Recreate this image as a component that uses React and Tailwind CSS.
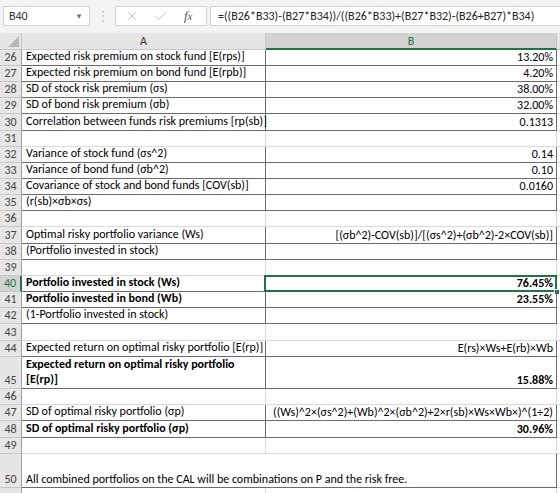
import { X, Check } from 'lucide-react';

// Excel-style worksheet view: formula bar + columns A/B, rows 26–51.

const DARK = 'border-[#6b6b6b]';

const ROWS = [
  { n: 26, a: 'Expected risk premium on stock fund [E(rps)]', b: '13.20%' },
  { n: 27, a: 'Expected risk premium on bond fund [E(rpb)]', b: '4.20%' },
  { n: 28, a: 'SD of stock risk premium (σs)', b: '38.00%' },
  { n: 29, a: 'SD of bond risk premium (σb)', b: '32.00%' },
  { n: 30, a: 'Correlation between funds risk premiums [rp(sb)]', b: '0.1313', extra: true },
  { n: 31, empty: true },
  { n: 32, a: 'Variance of stock fund (σs^2)', b: '0.14' },
  { n: 33, a: 'Variance of bond fund (σb^2)', b: '0.10' },
  { n: 34, a: 'Covariance of stock and bond funds [COV(sb)]', b: '0.0160' },
  { n: 35, a: '(r(sb)×σb×σs)', b: '' },
  { n: 36, empty: true },
  { n: 37, a: 'Optimal risky portfolio variance (Ws)', b: '[(σb^2)-COV(sb)]/[(σs^2)+(σb^2)-2×COV(sb)]', extra: true },
  { n: 38, a: '(Portfolio invested in stock)', b: '' },
  { n: 39, empty: true },
  { n: 40, a: 'Portfolio invested in stock (Ws)', b: '76.45%', bold: true, selected: true },
  { n: 41, a: 'Portfolio invested in bond (Wb)', b: '23.55%', bold: true },
  { n: 42, a: '(1-Portfolio invested in stock)', b: '' },
  { n: 43, empty: true, extra: true },
  { n: 44, a: 'Expected return on optimal risky portfolio [E(rp)]', b: 'E(rs)×Ws+E(rb)×Wb' },
  { n: 45, a: ['Expected return on optimal risky portfolio', '[E(rp)]'], b: '15.88%', bold: true, tall: true },
  { n: 46, empty: true },
  { n: 47, a: 'SD of optimal risky portfolio (σp)', b: '((Ws)^2×(σs^2)+(Wb)^2×(σb^2)+2×r(sb)×Ws×Wb×)^(1÷2)' },
  { n: 48, a: 'SD of optimal risky portfolio (σp)', b: '30.96%', bold: true, extra: true },
  { n: 49, empty: true },
  { n: 50, merged: 'All combined portfolios on the CAL will be combinations on P and the risk free.' },
  { n: 51, empty: true, hidden: true },
];

function FormulaBar() {
  return (
    <div className="h-[33px] bg-[#f3f3f3] flex items-start pt-[6px] pl-[3px] shrink-0">
      <div className="w-[87px] h-[20px] bg-white border border-[#d4d4d4] flex items-center pl-[5px] pr-[6px] justify-between">
        <span className="text-[12px] text-[#333]">B40</span>
        <span className="text-[8px] text-[#777]">▼</span>
      </div>
      <div className="w-[25px] h-[20px] flex items-center justify-center text-[#bdbdbd] text-[12px]">⋮</div>
      <div className="w-[92px] h-[20px] bg-white border border-[#d4d4d4] flex items-center pl-[9px] gap-[14px]">
        <X size={14} strokeWidth={1.2} className="text-[#a8a8a8]" />
        <Check size={15} strokeWidth={1.2} className="text-[#a8a8a8]" />
        <span className="font-['Liberation_Serif',serif] italic text-[13px] text-[#555] ml-[2px]">
          f<span className="text-[10px]">x</span>
        </span>
      </div>
      <div className="flex-1 h-[20px] ml-[3px] bg-white border border-[#d4d4d4] border-r-0 flex items-center pl-[7px] text-[12px] text-[#222] whitespace-nowrap overflow-hidden">
        =((B26*B33)-(B27*B34))/((B26*B33)+(B27*B32)-(B26+B27)*B34)
      </div>
    </div>
  );
}

function HeaderRow() {
  return (
    <div className="flex h-[17px] bg-[#f3f3f3] shrink-0">
      <div className="w-[22px] h-full bg-[#e6e6e6] border-r border-b border-[#c6c6c6] relative">
        <div className="absolute right-[2px] bottom-[2px] w-0 h-0 border-l-[11px] border-l-transparent border-b-[11px] border-b-[#b8b8b8]" />
      </div>
      <div className="w-[244px] h-full bg-[#e6e6e6] border-r border-b border-[#c6c6c6] flex items-center justify-center text-[12px] text-[#333]">
        A
      </div>
      <div className="w-[291px] h-full bg-[#d2d2d2] border-r border-[#c6c6c6] border-b-2 border-b-[#217346] flex items-center justify-center text-[12px] text-[#217346]">
        B
      </div>
      <div className="flex-1 h-full bg-[#e6e6e6] border-b border-[#c6c6c6]" />
    </div>
  );
}

function SheetRow({ row, nextBordered }) {
  const bordered = !row.empty;
  const h = row.tall ? 'h-[32px]' : row.n === 50 ? 'h-[34px]' : row.extra ? 'h-[17px]' : 'h-[16px]';
  const bottom = bordered || nextBordered ? DARK : 'border-[#dadada]';
  const side = bordered ? DARK : 'border-[#dadada]';
  const weight = row.bold ? 'font-bold' : '';

  return (
    <div className="flex shrink-0">
      <div
        className={`w-[22px] ${h} border-b border-[#c6c6c6] flex items-end justify-center pb-[1px] text-[12px] leading-[14px] ${
          row.selected
            ? 'bg-[#d2d2d2] text-[#217346] border-r-2 border-r-[#217346]'
            : 'bg-[#e6e6e6] text-[#444] border-r border-r-[#9e9e9e]'
        }`}
      >
        {!row.hidden && row.n}
      </div>

      {row.merged ? (
        <div className={`w-[535px] ${h} border-b border-r ${DARK} flex items-end pl-[4px] pb-[1px] text-[12px] leading-[14px] text-black whitespace-nowrap`}>
          {row.merged}
        </div>
      ) : (
        <>
          <div
            className={`w-[244px] ${h} border-b border-r ${bottom} ${side} flex flex-col justify-end pl-[4px] pb-[1px] text-[12px] leading-[15px] text-black whitespace-nowrap ${weight}`}
          >
            {Array.isArray(row.a) ? row.a.map(line => <span key={line}>{line}</span>) : row.a}
          </div>
          <div
            className={`w-[291px] ${h} border-b border-r ${bottom} ${side} relative flex items-end justify-end pr-[3px] pb-[1px] text-[12px] leading-[14px] text-black whitespace-nowrap ${weight}`}
          >
            {row.b}
            {row.selected && (
              <>
                <div className="absolute -left-[2px] -top-[1px] -right-[1px] -bottom-[1px] border-2 border-[#217346] pointer-events-none" />
                <div className="absolute -right-[4px] -bottom-[4px] w-[6px] h-[6px] bg-[#217346] border border-white" />
              </>
            )}
          </div>
        </>
      )}
      <div className={`flex-1 ${h} border-b border-[#dadada]`} />
    </div>
  );
}

export default function App() {
  return (
    <div className="w-[560px] h-[493px] overflow-hidden bg-white flex flex-col font-['Carlito','Lato',sans-serif]">
      <FormulaBar />
      <div className="h-[1px] bg-[#f3f3f3]" />
      <HeaderRow />
      {ROWS.map((row, i) => (
        <SheetRow key={row.n} row={row} nextBordered={ROWS[i + 1] && !ROWS[i + 1].empty} />
      ))}
    </div>
  );
}
